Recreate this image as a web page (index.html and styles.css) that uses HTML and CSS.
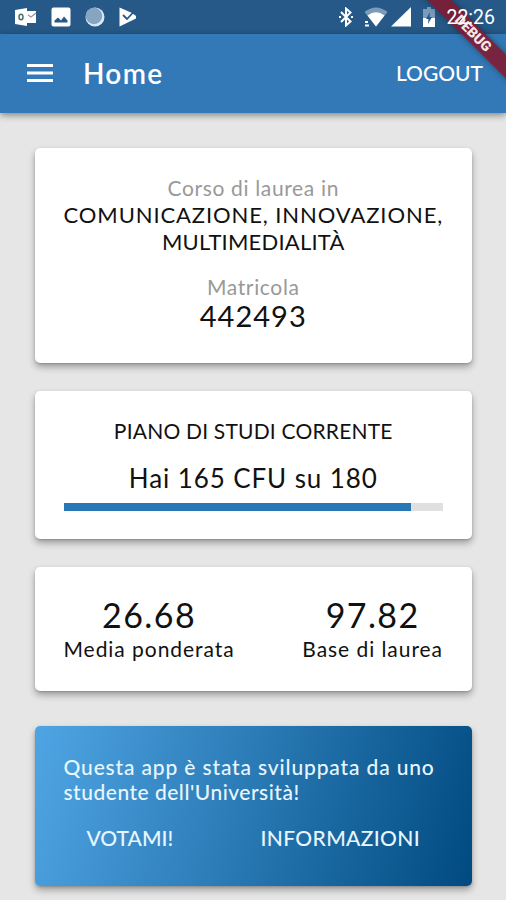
FILE: index.html
```html
<!DOCTYPE html>
<html lang="it">
<head>
    <meta charset="UTF-8">
    <meta name="viewport" content="width=device-width, initial-scale=1.0">
    <title>Home</title>

    <link rel="stylesheet" href="styles.css">
</head>
<body>

    <div class="status-bar">
        <div class="notifications">
            <svg width="22" height="20" viewBox="0 0 22 20">
                <path d="M11 4h10v12H11z" fill="#fff"/>
                <path d="M13 8l3 2 5-4" fill="none" stroke="#a08f95" stroke-width="1.3"/>
                <path d="M0 3l12-2v18L0 17z" fill="#fff"/>
                <ellipse cx="6" cy="10" rx="2" ry="2.8" fill="none" stroke="#4d7468" stroke-width="1.5"/>
            </svg>
            <svg width="20" height="20" viewBox="0 0 20 20">
                <rect x="0.5" y="0.5" width="19" height="19" rx="2" fill="#fff"/>
                <path d="M3.5 15.5v-2l3.5-3 3 3 3-4 3.5 4v2z" fill="#265987"/>
            </svg>
            <svg width="20" height="20" viewBox="0 0 20 20">
                <circle cx="10" cy="10" r="9.5" fill="#dbe7f2"/>
                <circle cx="9" cy="9" r="8.2" fill="#86a5c3"/>
            </svg>
            <svg width="18" height="20" viewBox="0 0 18 20">
                <path d="M0.5 0.5L13 6l4 3v2.500L0.5 19.5z" fill="#fff"/>
                <path d="M4 8l4 4 8-8.500" fill="none" stroke="#265987" stroke-width="1.8"/>
            </svg>
        </div>
        <div class="system">
            <svg class="bluetooth" width="14" height="20" viewBox="0 0 14 20">
                <path d="M2 5l9.500 9.500L7 18.500V1.500l4.500 4L2 15" fill="none" stroke="#fff" stroke-width="2"/>
                <path d="M0 9h2v2H0zM12 9h2v2h-2z" fill="#fff"/>
            </svg>
            <svg class="wifi" width="24" height="20" viewBox="0 0 24 20">
                <path d="M0.500 5Q12-4 23.500 5L12 19.500z" fill="#7a9bb9"/>
                <path d="M3.500 8.500Q12 2 20.500 8.500L12 19.500z" fill="#fff"/>
                <path d="M1 14h3v2H1zM1 17.500h4v2H1z" fill="#fff"/>
            </svg>
            <svg class="signal" width="20" height="20" viewBox="0 0 20 20">
                <path d="M20 0v19.500H0z" fill="#fff"/>
            </svg>
            <svg class="battery" width="12" height="20" viewBox="0 0 12 20">
                <path d="M0 2h4V0h4v2h4v9H0z" fill="#7a9bb9"/>
                <path d="M0 11h12v9H0z" fill="#fff"/>
                <path d="M7 5L3 12h2.500L5 17l4-7H6.500z" fill="#265987"/>
            </svg>
            <span class="clock">22:26</span>
        </div>
    </div>

    <div class="app-bar">
        <svg class="menu-icon" width="26" height="18" viewBox="0 0 26 18">
            <path d="M0 1.600h26M0 9h26M0 16.400h26" stroke="#fff" stroke-width="3"/>
        </svg>
        <h1>Home</h1>
        <span class="logout">LOGOUT</span>
    </div>

    <div class="debug-banner"><span>DEBUG</span></div>

    <div class="content">
        <div class="card course">
            <div class="label">Corso di laurea in</div>
            <div class="course-name"><span class="wide">COMUNICAZIONE, INNOVAZIONE,</span><br>MULTIMEDIALITÀ</div>
            <div class="label">Matricola</div>
            <div class="student-id">442493</div>
        </div>

        <div class="card plan">
            <div class="plan-title">PIANO DI STUDI CORRENTE</div>
            <div class="plan-cfu">Hai 165 CFU su 180</div>
            <div class="progress"><div class="progress-fill" style="width: 91.67%"></div></div>
        </div>

        <div class="card stats">
            <div class="stat">
                <div class="stat-value">26.68</div>
                <div class="stat-label">Media ponderata</div>
            </div>
            <div class="stat">
                <div class="stat-value">97.82</div>
                <div class="stat-label">Base di laurea</div>
            </div>
        </div>

        <div class="card about">
            <p><span class="wide">Questa app è stata sviluppata da uno</span><br>studente dell'Università!</p>
            <div class="btn-holder">
                <span>VOTAMI!</span>
                <span class="info">INFORMAZIONI</span>
            </div>
        </div>
    </div>

</body>
</html>
```
FILE: styles.css
```css
* {
    margin: 0;
    box-sizing: border-box;
}

body {
    width: 506px;
    height: 900px;
    overflow: hidden;
    position: relative;
    background-color: #e6e6e6;
    color: #111;
    font-family: Lato, sans-serif;
}

svg {
    display: block;
    flex-shrink: 0;
}

.status-bar {
    display: flex;
    justify-content: space-between;
    height: 34px;
    padding: 7px 11px 7px 15px;
    background-color: #265987;
}

.notifications {
    display: flex;
    gap: 14px;
}

.system {
    display: flex;
    color: #fff;
}

.wifi {margin-left: 11px;}
.signal {margin-left: 3px;}
.battery {margin-left: 12px;}

.clock {
    position: relative;
    z-index: 2;
    margin-left: 11px;
    font-family: Roboto, sans-serif;
    font-size: 19.5px;
    line-height: 22px;
}

.app-bar {
    display: flex;
    align-items: center;
    height: 79px;
    padding: 0 23px 2px 27px;
    background-color: #3479b7;
    color: #fff;
    position: relative;
    box-shadow: 0 2px 7px rgba(0, 0, 0, 0.45);
}

.app-bar h1 {
    margin-left: 30px;
    font-size: 28px;
    font-weight: 600;
    line-height: 34px;
    letter-spacing: 1.3px;
}

.logout {
    margin-left: auto;
    font-size: 21px;
    font-weight: 500;
}

/* diagonal ribbon over the top right corner */
.debug-banner {
    position: absolute;
    top: 0;
    right: 0;
    width: 90px;
    height: 90px;
    overflow: hidden;
}

.debug-banner span {
    position: absolute;
    top: 25px;
    left: -13px;
    width: 140px;
    height: 17px;
    transform: rotate(45deg);
    background-color: rgba(130, 24, 48, 0.88);
    box-shadow: 0 0 6px rgba(0, 0, 0, 0.4);
    color: #f3e6ea;
    font: 900 14px/17px Roboto, sans-serif;
    text-align: center;
}

.content {
    padding: 35px 35px 0;
}

.card {
    width: 436.5px;
    padding: 27px 28.5px 28px;
    margin-bottom: 28px;
    border-radius: 5px;
    background-color: #fff;
    box-shadow: 0 4px 7px rgba(0, 0, 0, 0.32), 0 1px 2px rgba(0, 0, 0, 0.15);
    text-align: center;
    white-space: nowrap;
}

.label {
    color: #999;
    font-size: 21px;
    line-height: 26px;
    letter-spacing: 0.65px;
}

.course {padding-bottom: 31px;}

.course-name {
    margin-bottom: 19px;
    font-size: 22px;
    line-height: 27px;
    letter-spacing: 0.2px;
}

.course-name .wide {
    letter-spacing: 0.9px;
}

.student-id {
    font-size: 29px;
    line-height: 32px;
    letter-spacing: 1px;
}

.plan-title {
    font-size: 21px;
    line-height: 26px;
    letter-spacing: 0.2px;
}

.plan-cfu {
    margin: 19px 0 10px;
    font-size: 26px;
    line-height: 30px;
    letter-spacing: 0.9px;
}

.progress {
    height: 8px;
    background-color: #e0e0e0;
}

.progress-fill {
    height: 8px;
    background-color: #2878b8;
}

.stats {
    display: flex;
    justify-content: space-between;
    padding: 28px 28.5px 29px;
    margin-bottom: 35px;
}

.stat-value {
    font-size: 34px;
    line-height: 40px;
    letter-spacing: 1.4px;
}

.stat-label {
    margin-top: 1px;
    font-size: 21px;
    line-height: 26px;
    letter-spacing: 0.95px;
}

.about {
    padding: 28px 28.5px 35px;
    background: linear-gradient(105deg, #4fa5e3 0%, #2a7ab5 48%, #004a80 100%);
    color: #e8f6ff;
    text-align: left;
}

.about p {
    font-size: 21px;
    font-weight: 500;
    line-height: 25px;
    letter-spacing: 0.5px;
}

.about .wide {
    letter-spacing: 0.85px;
}

.btn-holder {
    display: flex;
    justify-content: space-between;
    margin-top: 21px;
    padding: 0 23px;
    font-size: 21px;
    font-weight: 500;
    line-height: 26px;
}

.info {
    letter-spacing: 0.35px;
}
```
